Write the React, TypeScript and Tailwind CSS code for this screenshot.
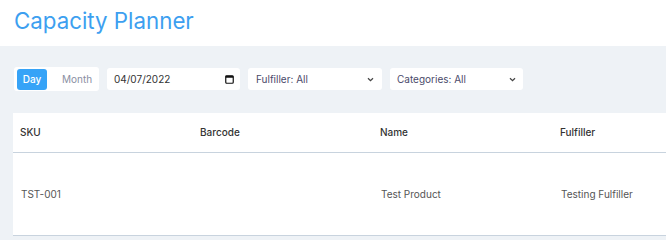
export default function App() {
  const cols = ["SKU", "Barcode", "Name", "Fulfiller"];
  const row = ["TST-001", "", "Test Product", "Testing Fulfiller"];
  return (
    <div className="w-[666px] h-[240px] overflow-hidden bg-[#eef2f6]" style={{ fontFamily: "Inter, 'Noto Sans', sans-serif" }}>
      <div className="bg-white h-[46px] px-[14px] flex items-center">
        <h1 className="text-[22.3px] text-[#3d9ff0] leading-none mt-[-4px]">Capacity Planner</h1>
      </div>
      <div className="pl-[14px]">
        <div className="flex items-center gap-[8px] mt-[21px] h-[24px]">
          <div className="bg-white rounded-[3px] h-[24px] w-[85px] flex items-center px-[3px]">
            <div className="bg-[#36a3f7] text-white rounded-[3px] h-[21px] w-[30px] flex items-center justify-center text-[10px] font-medium">Day</div>
            <div className="text-[#8a8fa3] text-[10px] pl-[15px]">Month</div>
          </div>
          <div className="bg-white rounded-[3px] h-[22px] w-[133px] flex items-center justify-between pl-[7px] pr-[6px] text-[10px] text-[#333]">
            <span>04/07/2022</span>
            <svg width="9" height="9" viewBox="0 0 9 9"><rect x="0.75" y="0.75" width="7.5" height="7.5" rx="1" fill="none" stroke="#111" strokeWidth="1.2"/><rect x="0.75" y="0.75" width="7.5" height="2" fill="#111"/></svg>
          </div>
          <div className="bg-white rounded-[3px] h-[22px] w-[134px] flex items-center justify-between px-[8px] text-[10px] text-[#4a4a6a]">
            <span>Fulfiller: All</span>
            <svg width="7" height="5" viewBox="0 0 7 5"><path d="M1 1.2 L3.5 3.7 L6 1.2" fill="none" stroke="#444" strokeWidth="1.3"/></svg>
          </div>
          <div className="bg-white rounded-[3px] h-[22px] w-[133px] flex items-center justify-between px-[7px] text-[10px] text-[#4a4a6a]">
            <span>Categories: All</span>
            <svg width="7" height="5" viewBox="0 0 7 5"><path d="M1 1.2 L3.5 3.7 L6 1.2" fill="none" stroke="#444" strokeWidth="1.3"/></svg>
          </div>
        </div>
        <div className="bg-white mt-[22px] w-[700px] -ml-[1px]">
          <div className="grid grid-cols-[180px_180px_180px_180px] h-[40px] items-center border-b border-[#c8d3de] text-[10px] font-medium text-[#333]">
            {cols.map((c) => (
              <div key={c} className="pl-[7px]">{c}</div>
            ))}
          </div>
          <div className="grid grid-cols-[180px_180px_180px_180px] h-[83px] items-center border-b border-[#c8d3de] text-[10px] text-[#555]">
            {row.map((c, i) => (
              <div key={i} className="pl-[8px]">{c}</div>
            ))}
          </div>
        </div>
      </div>
    </div>
  );
}
